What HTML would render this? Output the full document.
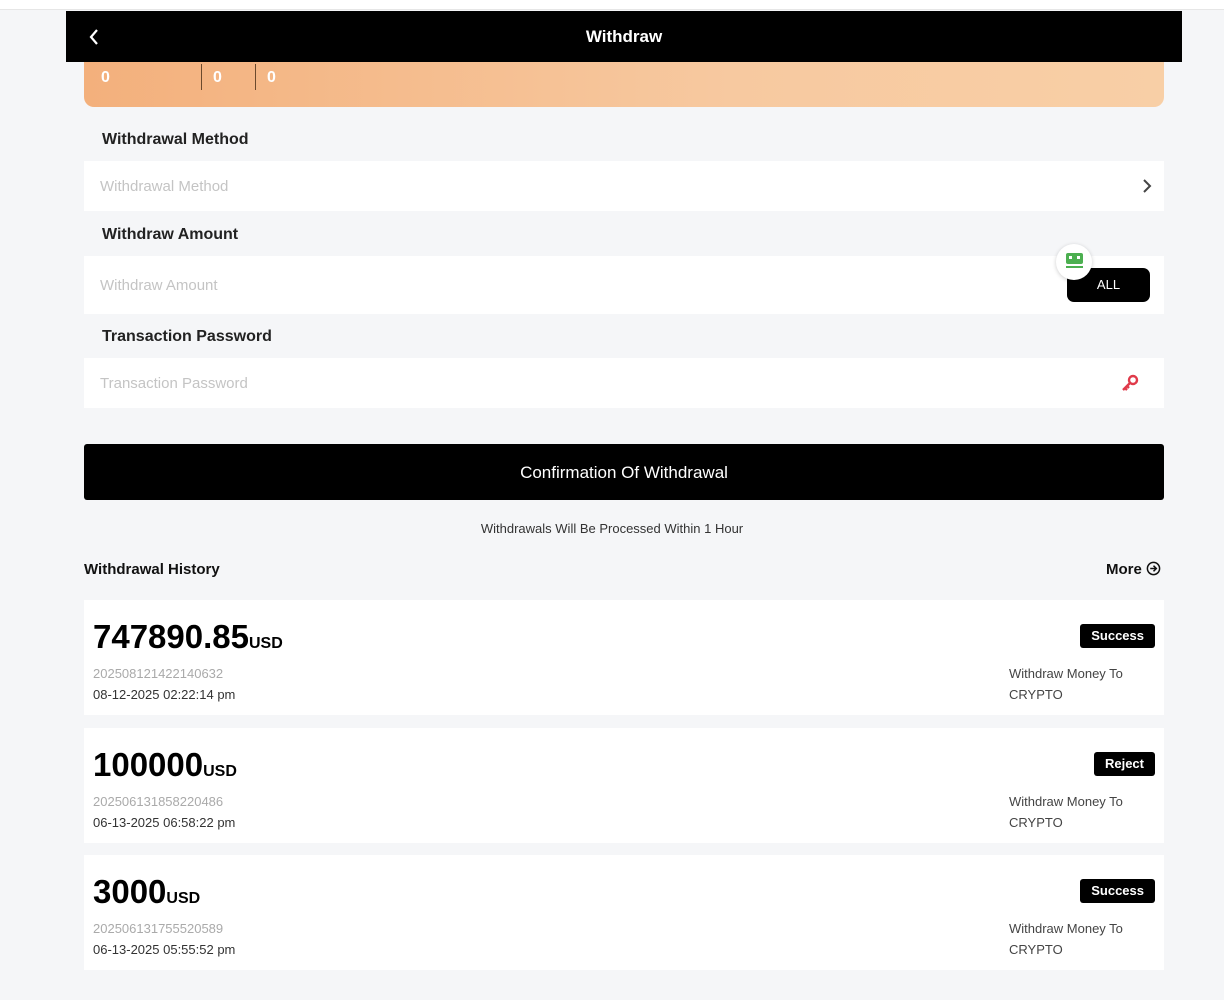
<!DOCTYPE html>
<html><head><meta charset="utf-8"><style>
*{box-sizing:border-box;margin:0;padding:0}
body{width:1224px;height:1000px;background:#f5f6f8;font-family:"Liberation Sans",sans-serif;position:relative;overflow:hidden;color:#111}
.top{position:absolute;left:0;top:0;width:1224px;height:10px;background:#fff;border-bottom:1px solid #e6e6e6}
.hdr{position:absolute;left:66px;top:11px;width:1116px;height:51px;background:#000;color:#fff;text-align:center;font-weight:bold;font-size:17px;line-height:52px}
.hdr svg{position:absolute;left:22px;top:17px}
.org{position:absolute;left:84px;top:50px;width:1080px;height:57px;border-radius:0 0 10px 10px;background:linear-gradient(90deg,#f3b07c,#f7c9a0 60%,#f8cfa6);color:#fff;font-weight:bold;font-size:16px}
.org span{position:absolute;top:19px}
.org i{position:absolute;top:14px;width:1px;height:26px;background:#6b4a2d}
.lbl{position:absolute;left:102px;font-size:16px;font-weight:bold;color:#222}
.inp{position:absolute;left:84px;width:1080px;background:#fff;color:#c4c4c4;font-size:15px;padding-left:16px}
.btn{position:absolute;left:84px;top:444px;width:1080px;height:56px;background:#000;border-radius:3px;color:#fff;text-align:center;line-height:57px;font-size:17px}
.note{position:absolute;top:521px;width:1224px;text-align:center;font-size:13px;color:#333}
.card{position:absolute;left:84px;width:1080px;height:115px;background:#fff}
.amt{position:absolute;left:9px;top:18px;font-size:33px;font-weight:bold;color:#000}
.amt small{font-size:16px}
.id{position:absolute;left:9px;top:66px;font-size:13px;color:#aaa}
.dt{position:absolute;left:9px;top:87px;font-size:13px;color:#333}
.tag{position:absolute;right:9px;top:24px;height:24px;padding:0 11px;background:#000;color:#fff;font-size:13px;font-weight:bold;line-height:24px;border-radius:3px}
.wm{position:absolute;left:925px;top:63px;font-size:13px;color:#444;line-height:21px}
</style></head><body>
<div class="top"></div>
<div class="org"><span style="left:17px">0</span><i style="left:117px"></i><span style="left:129px">0</span><i style="left:171px"></i><span style="left:183px">0</span></div>
<div class="hdr"><svg width="12" height="18" viewBox="0 0 12 18"><path d="M9 2L3 9l6 7" stroke="#fff" stroke-width="2.2" fill="none"/></svg>Withdraw</div>
<div class="lbl" style="top:131px">Withdrawal Method</div>
<div class="inp" style="top:161px;height:50px;line-height:52px">Withdrawal Method<svg style="position:absolute;right:12px;top:17px" width="10" height="16" viewBox="0 0 10 16"><path d="M2 2l6 6-6 6" stroke="#444" stroke-width="2" fill="none"/></svg></div>
<div class="lbl" style="top:226px">Withdraw Amount</div>
<div class="inp" style="top:256px;height:58px;line-height:60px">Withdraw Amount
<div style="position:absolute;left:983px;top:12px;width:83px;height:34px;background:#000;border-radius:7px;color:#fff;font-size:13px;text-align:center;line-height:34px">ALL</div>
<div style="position:absolute;left:972px;top:-12px;width:36px;height:36px;border-radius:50%;background:#fff;box-shadow:0 1px 4px rgba(0,0,0,.2)"><div style="position:absolute;left:10px;top:9px;width:17px;height:11px;background:#4caf50;border-radius:2px"></div><div style="position:absolute;left:13px;top:12px;width:3px;height:3px;background:#fff"></div><div style="position:absolute;left:21px;top:12px;width:3px;height:3px;background:#fff"></div><div style="position:absolute;left:10px;top:22px;width:17px;height:2px;background:#4caf50"></div></div></div>
<div class="lbl" style="top:328px">Transaction Password</div>
<div class="inp" style="top:358px;height:50px;line-height:52px">Transaction Password<svg style="position:absolute;right:24px;top:15px" width="20" height="20" viewBox="0 0 20 20"><circle cx="13" cy="7" r="4" stroke="#e03a4a" stroke-width="2.4" fill="none"/><path d="M10 10L3 17M5 15l2 2M7 13l2 2" stroke="#e03a4a" stroke-width="2.4"/></svg></div>
<div class="btn">Confirmation Of Withdrawal</div>
<div class="note">Withdrawals Will Be Processed Within 1 Hour</div>
<div style="position:absolute;left:84px;top:561px;font-size:15px;font-weight:bold">Withdrawal History</div>
<div style="position:absolute;left:1106px;top:561px;font-size:15px;font-weight:bold">More <svg width="15" height="15" viewBox="0 0 16 16" style="vertical-align:-2px"><circle cx="8" cy="8" r="6.5" stroke="#111" stroke-width="1.6" fill="none"/><path d="M4.5 8h6M8 5l3 3-3 3" stroke="#111" stroke-width="1.6" fill="none"/></svg></div>
<div class="card" style="top:600px"><div class="amt">747890.85<small>USD</small></div><div class="id">202508121422140632</div><div class="dt">08-12-2025 02:22:14 pm</div><div class="tag">Success</div><div class="wm">Withdraw Money To<br>CRYPTO</div></div>
<div class="card" style="top:728px"><div class="amt">100000<small>USD</small></div><div class="id">202506131858220486</div><div class="dt">06-13-2025 06:58:22 pm</div><div class="tag">Reject</div><div class="wm">Withdraw Money To<br>CRYPTO</div></div>
<div class="card" style="top:855px"><div class="amt">3000<small>USD</small></div><div class="id">202506131755520589</div><div class="dt">06-13-2025 05:55:52 pm</div><div class="tag">Success</div><div class="wm">Withdraw Money To<br>CRYPTO</div></div>
</body></html>
